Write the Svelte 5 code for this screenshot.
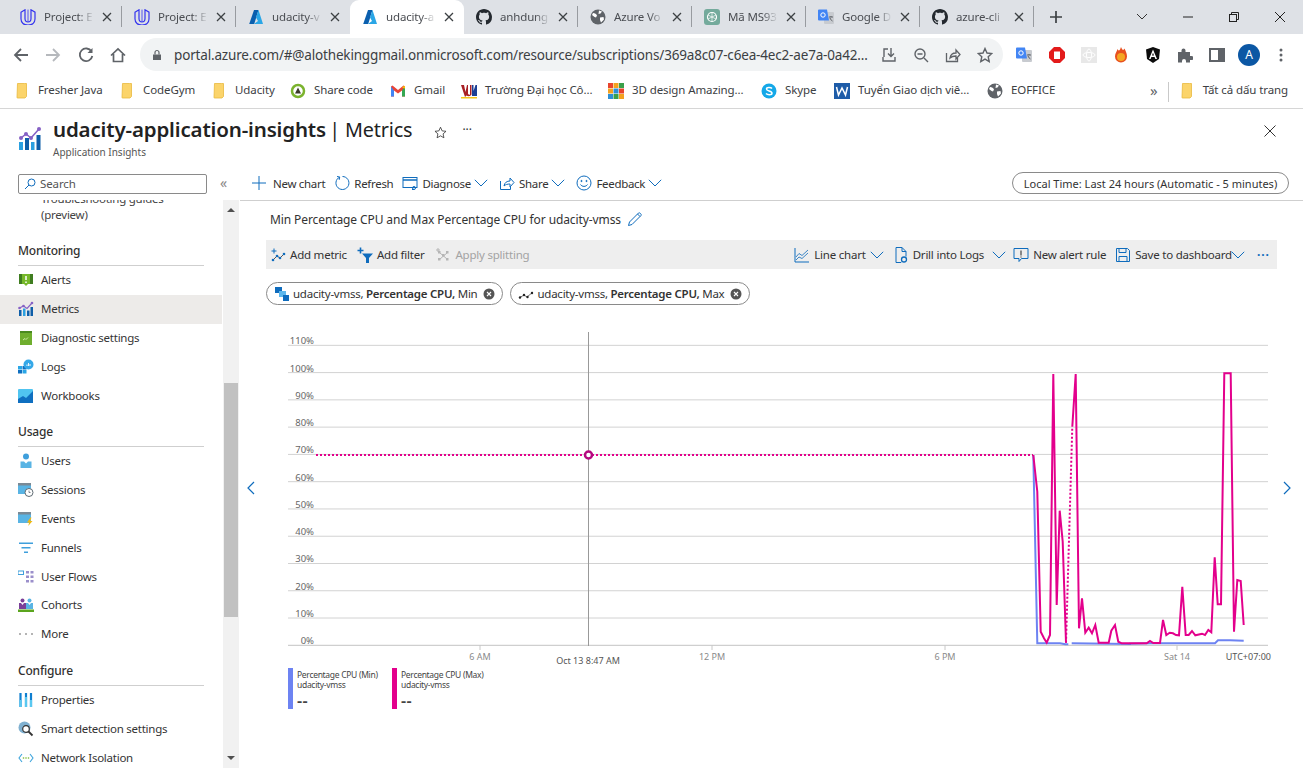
<script>
  const tabs = [
    { t: 'Project: E', i: 'u' }, { t: 'Project: E', i: 'u' }, { t: 'udacity-v', i: 'az', ns: 1 },
    { t: 'udacity-a', i: 'az', active: 1 }, { t: 'anhdung', i: 'gh' }, { t: 'Azure Vo', i: 'globe' },
    { t: 'Mã MS93', i: 'gpt' }, { t: 'Google D', i: 'gt' }, { t: 'azure-cli', i: 'gh' }
  ];
  const bookmarks = [
    { t: 'Fresher Java', i: 'folder', w: 105 }, { t: 'CodeGym', i: 'folder', w: 92 }, { t: 'Udacity', i: 'folder', w: 79 },
    { t: 'Share code', i: 'share', w: 100 }, { t: 'Gmail', i: 'gmail', w: 71 }, { t: 'Trường Đại học Cô...', i: 'vku', w: 147 },
    { t: '3D design Amazing...', i: 'tink', w: 153 }, { t: 'Skype', i: 'skype', w: 73 }, { t: 'Tuyển Giao dịch viê...', i: 'word', w: 153 },
    { t: 'EOFFICE', i: 'globe', w: 90 }
  ];
  const groups = [
    { h: 'Monitoring', items: [['Alerts', 'alert'], ['Metrics', 'metrics', 1], ['Diagnostic settings', 'diag'], ['Logs', 'logs'], ['Workbooks', 'work']] },
    { h: 'Usage', items: [['Users', 'users'], ['Sessions', 'sess'], ['Events', 'events'], ['Funnels', 'funnel'], ['User Flows', 'flows'], ['Cohorts', 'cohorts'], ['More', 'more']] },
    { h: 'Configure', items: [['Properties', 'props'], ['Smart detection settings', 'smart'], ['Network Isolation', 'net']] }
  ];
  const base = 645.3, step = 27.27;
  const gridY = Array.from({ length: 12 }, (_, i) => ({ p: i * 10, y: base - i * step }));
  const z7 = (a) => a.map(([x, y]) => [1020 + x / 3, 360 + y / 3]);
  const z8 = (a) => a.map(([x, y]) => [1130 + x / 3, 360 + y / 3]);
  const pts = (a) => a.map(([x, y]) => `${x.toFixed(1)},${y.toFixed(1)}`).join(' ');
  const mag1 = pts(z7([[40,285],[52,395],[62,815],[72,835],[80,848],[90,825],[100,42],[110,735],[119,452],[128,545],[138,848]]));
  const mag2 = pts([...z7([[157,200],[167,42],[177,805],[186,715],[196,818],[206,803],[216,820],[226,795],[236,848],[266,848],[274,812],[285,795],[295,845],[305,850],[330,850]]),
    ...z8([[0,850],[50,850],[60,843],[70,849],[90,849],[99,780],[109,825],[119,818],[129,820],[138,825],[147,826],[157,680],[167,825],[176,825],[186,813],[196,826],[216,821],[225,825],[235,810],[244,817],[254,592],[263,733],[273,733],[283,40],[302,40],[312,815],[322,660],[332,663],[341,795]])]);
  const magDot = pts(z7([[138,848],[157,200]]));
  const blue1 = pts(z7([[40,285],[52,850],[120,850],[136,853],[145,853]]));
  const blue2 = pts([...z7([[155,850],[330,852]]), ...z8([[0,851],[60,850],[255,850],[264,841],[300,841],[341,842]])]);
  const xLabels = [[480, '6 AM'], [712, '12 PM'], [945, '6 PM'], [1177, 'Sat 14']];
  const gh = 'M8 0C3.58 0 0 3.58 0 8c0 3.54 2.29 6.53 5.47 7.59.4.07.55-.17.55-.38 0-.19-.01-.82-.01-1.49-2.01.37-2.53-.49-2.69-.94-.09-.23-.48-.94-.82-1.13-.28-.15-.68-.52-.01-.53.63-.01 1.08.58 1.23.82.72 1.21 1.87.87 2.33.66.07-.52.28-.87.51-1.07-1.78-.2-3.64-.89-3.64-3.95 0-.87.31-1.59.82-2.15-.08-.2-.36-1.02.08-2.12 0 0 .67-.21 2.2.82.64-.18 1.32-.27 2-.27s1.36.09 2 .27c1.53-1.04 2.2-.82 2.2-.82.44 1.1.16 1.92.08 2.12.51.56.82 1.27.82 2.15 0 3.07-1.87 3.75-3.65 3.95.29.25.54.73.54 1.48 0 1.07-.01 1.93-.01 2.2 0 .21.15.46.55.38A8.01 8.01 0 0 0 16 8c0-4.42-3.58-8-8-8z';
</script>

{#snippet icon(n)}
  <svg class="ic" viewBox="0 0 16 16" width="16" height="16" fill="none">
    {#if n === 'u'}
      <path d="M1 3.200 5 .8v8.700c0 2.200 1 3.500 3 3.500s3-1.300 3-3.500V.8l4 2.400v6.800c0 3.800-3 6-7 6s-7-2.200-7-6z" stroke="#3434ee" stroke-width="1.200"/>
      <path d="M8 .6V13" stroke="#3434ee" stroke-width=".8"/>
    {:else if n === 'az'}
      <path d="M6 1h4.500L6.200 15H1.200z" fill="#0a5fae"/><path d="M10.500 1 15 15H6l4-3-2-3.500z" fill="#2aa6e6"/>
    {:else if n === 'gh'}
      <path d={gh} fill="#24292f"/>
    {:else if n === 'globe'}
      <circle cx="8" cy="8" r="7.500" fill="#5f6368"/><path d="M3 4c2 0 3.500 1 4 2.500L6 8.500 4.500 8 2 6zM9 1.500l3 1-1.500 2-2 .5zM10 8.500l3.500-.5.500 2.500-3 3-1-2.500z" fill="#fff"/>
    {:else if n === 'gpt'}
      <rect width="16" height="16" rx="3" fill="#74aa9c"/><circle cx="8" cy="8" r="4.500" stroke="#fff" stroke-width="1.200"/><path d="M8 3.500v9M4 6l8 4M12 6l-8 4" stroke="#fff" stroke-width=".7"/>
    {:else if n === 'gt'}
      <rect x="6" y="3" width="10" height="12" rx="1" fill="#c8cbd0"/><path d="M0 1.500a1 1 0 0 1 1-1h8l2 11H1a1 1 0 0 1-1-1z" fill="#4285f4"/><circle cx="5" cy="6" r="2.200" stroke="#fff" stroke-width="1"/><path d="M11 8h4M13 7v1M12 9c.5 1.500 1.500 2.500 2.500 3" stroke="#5f6368"/>
    {:else if n === 'folder'}
      <path d="M2.500 .5h7l2 0v13l-1.500 1.500h-7.500a.5.5 0 0 1-.5-.5z" fill="#fbd46b" stroke="#e9b93e" stroke-width=".8" transform="translate(1 0)"/>
    {:else if n === 'share'}
      <circle cx="8" cy="8" r="6" stroke="#7bb32e" stroke-width="2.500"/><path d="M8 4.500 11 10.500H5z" fill="#3a3a2a"/>
    {:else if n === 'gmail'}
      <path d="M1 3.500v10h3v-6l4 3 4-3v6h3v-10l-1.500-1L8 7 2.500 2.500z" fill="#ea4335"/><path d="M1 3.500v10h3v-6z" fill="#4285f4"/><path d="M15 3.500v10h-3v-6z" fill="#34a853"/><path d="M12 4.700 14 2.800l1 .7v2z" fill="#fbbc04"/>
    {:else if n === 'vku'}
      <path d="M0 2h3l1.500 7L6 2h1v8.500c0 1 1 1.500 2 1 V2h1.500v9c0 2-3 3-5 1.500L4 14 0 2z" fill="#a81f24"/><path d="M11 2h1.500v6l2-6H16v11h-5z" fill="#1b3f94"/><rect y="14" width="16" height="1.500" fill="#f5c518"/>
    {:else if n === 'tink'}
      <rect width="5" height="5" fill="#e8442e"/><rect x="5.500" width="5" height="5" fill="#f4a11f"/><rect x="11" width="5" height="5" fill="#3aa04a"/><rect y="5.500" width="5" height="5" fill="#f4a11f"/><rect x="5.500" y="5.500" width="5" height="5" fill="#2d8fd5"/><rect x="11" y="5.500" width="5" height="5" fill="#e8442e"/><rect y="11" width="5" height="5" fill="#2d8fd5"/><rect x="5.500" y="11" width="5" height="5" fill="#3aa04a"/><rect x="11" y="11" width="5" height="5" fill="#f4a11f"/>
    {:else if n === 'skype'}
      <circle cx="8" cy="8" r="7.500" fill="#14a8e8"/><path d="M11 5.500C10 4.200 5.500 4 5.500 6c0 2.500 5.500 1.500 5.500 4.200 0 2-4.500 2-6 .3" stroke="#fff" stroke-width="1.500"/>
    {:else if n === 'word'}
      <rect width="16" height="16" fill="#1e5ca8"/><path d="m2.500 4 2 8 3.500-7 3.500 7 2-8" stroke="#fff" stroke-width="1.500"/>
    {:else if n === 'alert'}
      <rect x="1" y="2" width="14" height="10" fill="#76b82a"/><rect x="1" y="2" width="3" height="10" fill="#3f7d20"/><rect x="12" y="2" width="3" height="10" fill="#3f7d20"/><path d="M8 4v4M8 9.500v1.500" stroke="#fff" stroke-width="1.500"/><path d="M6 12h4L8 14z" fill="#76b82a"/>
    {:else if n === 'metrics'}
      <path d="M1.500 7 5.500 5 9 7.500 14 2" stroke="#8661c5" stroke-width="1.200"/><circle cx="1.500" cy="7" r="1.300" fill="#8661c5"/><circle cx="5.500" cy="5" r="1.300" fill="#8661c5"/><circle cx="14" cy="2" r="1.300" fill="#8661c5"/><rect x="1" y="9" width="2.500" height="6" fill="#0f5ea8"/><rect x="5" y="7.500" width="2.500" height="7.500" fill="#2ba0e0"/><rect x="9" y="9.500" width="2.500" height="5.500" fill="#0f5ea8"/><rect x="12.500" y="6" width="2.500" height="9" fill="#0f5ea8"/>
    {:else if n === 'diag'}
      <rect x="2" y="1" width="12" height="14" fill="#6fae2e"/><rect x="2" y="1" width="12" height="2" fill="#4a8a1f"/><path d="m5 10 2-1.500 1 1 2-2" stroke="#d6f0b0" stroke-width=".9"/>
    {:else if n === 'logs'}
      <rect x="0" y="7" width="4" height="3.500" fill="#2aa6e6"/><rect x="4.500" y="7" width="4" height="3.500" fill="#0f6fc0"/><rect x="0" y="11" width="4" height="3.500" fill="#0f6fc0"/><rect x="4.500" y="11" width="4" height="3.500" fill="#2aa6e6"/><circle cx="10.500" cy="5.500" r="5" fill="#35a8e8"/><path d="M9 7V5.500M10.500 7V4M12 7V5" stroke="#fff" stroke-width=".9"/>
    {:else if n === 'work'}
      <rect y="1" width="15" height="14" rx="1" fill="#50c4f0"/><path d="M0 15v-4l5-3 3 2 7-7v12z" fill="#0f6fc0"/>
    {:else if n === 'users'}
      <circle cx="8" cy="3.500" r="3" fill="#3f9fdc"/><path d="M2.500 15V8.500h3.500L8 10.500 10 8.500h3.500V15z" fill="#59b4e4"/>
    {:else if n === 'sess'}
      <rect y="1" width="13" height="11" fill="#59b4e4"/><rect y="1" width="13" height="2.500" fill="#7a8a96"/><circle cx="11" cy="10.500" r="4" fill="#fff" stroke="#5f6b73" stroke-width="1"/><path d="M11 8.500v2h1.500" stroke="#5f6b73" stroke-width=".8"/>
    {:else if n === 'events'}
      <rect y="1" width="13" height="11" fill="#59b4e4"/><rect y="1" width="13" height="2.500" fill="#7a8a96"/><path d="M12.500 6.500 9 11.500h2.200l-1 3.500 4.300-5h-2.300l1.300-3.500z" fill="#f2b90f"/>
    {:else if n === 'funnel'}
      <rect x="1" y="2.500" width="14" height="1.500" fill="#3f9fdc"/><rect x="3.500" y="7" width="9" height="1.500" fill="#3f9fdc"/><rect x="6" y="11.500" width="4" height="1.500" fill="#3f9fdc"/>
    {:else if n === 'flows'}
      <rect x="0" y="2" width="5.500" height="3.500" stroke="#3f9fdc"/><g fill="#9b8fcb"><rect x="8" y="2" width="3" height="2.500"/><rect x="12.500" y="2" width="3" height="2.500"/><rect x="8" y="6.500" width="3" height="2.500"/><rect x="12.500" y="6.500" width="3" height="2.500"/><rect x="8" y="11" width="3" height="2.500"/><rect x="12.500" y="11" width="3" height="2.500"/></g>
    {:else if n === 'cohorts'}
      <circle cx="4.500" cy="3.500" r="2" fill="#7a3f98"/><circle cx="11.500" cy="3.500" r="2" fill="#59b4e4"/><path d="M1 12V6h2l1.500 2L6 6h2v6z" fill="#7a3f98"/><path d="M8 12V6h2l1.500 2L13 6h2v6z" fill="#59b4e4"/><rect y="12.500" width="16" height="2.500" fill="#5ba51e"/>
    {:else if n === 'more'}
      <g fill="#555"><circle cx="2" cy="8" r=".8"/><circle cx="8" cy="8" r=".8"/><circle cx="14" cy="8" r=".8"/></g>
    {:else if n === 'props'}
      <path d="M2.500 1v14M8 1v14M13 1v14" stroke="#0f7fd0" stroke-width="2.200"/><path d="M2.500 8v7M8 5v10M13 8v7" stroke="#59c8f0" stroke-width="2.200"/>
    {:else if n === 'smart'}
      <circle cx="6.500" cy="6.500" r="6" fill="#7fb0d0"/><circle cx="8" cy="8" r="3.300" fill="#fff" stroke="#333" stroke-width="1.200"/><path d="m10.500 10.500 4 4" stroke="#333" stroke-width="1.800"/>
    {:else if n === 'net'}
      <path d="M4 4 1 8l3 4M12 4l3 4-3 4" stroke="#3fa5dc" stroke-width="1.100"/><g fill="#76b82a"><circle cx="5.500" cy="8" r=".8"/><circle cx="8" cy="8" r=".8"/><circle cx="10.500" cy="8" r=".8"/></g>
    {/if}
  </svg>
{/snippet}

{#snippet cmd(n)}
  <svg class="ic" viewBox="0 0 16 16" width="16" height="16" fill="none" stroke="#0f6cbd" stroke-width="1">
    {#if n === 'plus'}
      <path d="M8 1v14M1 8h14"/>
    {:else if n === 'refresh'}
      <path d="M5.500 2.200A6.500 6.500 0 1 0 8.500 1.500"/><path d="M3 1.500 5.700 2 5.200 4.800" stroke-width="1"/>
    {:else if n === 'diagnose'}
      <rect x="1" y="2.500" width="14" height="10"/><path d="M1 5h14" stroke-width="1.500"/><circle cx="12" cy="13" r="1.500"/><path d="M10 14.500h2"/>
    {:else if n === 'share'}
      <path d="M1.500 6v8.500h10V11"/><path d="M5 11c.5-3.500 3-5 6-5V3l4 4.500L11 12V9c-2.500 0-4.500.5-6 2z"/>
    {:else if n === 'feedback'}
      <circle cx="8" cy="8" r="7"/><circle cx="5.500" cy="6" r=".6" fill="#0f6cbd"/><circle cx="10.500" cy="6" r=".6" fill="#0f6cbd"/><path d="M4.500 9.500c1.500 2.500 5.500 2.500 7 0"/>
    {:else if n === 'chart'}
      <path d="M1 1v14h14"/><path d="m2 10 3-3.500 3 2L14 3M2 13l3-3 3 1.500L14 6" stroke-width=".8"/>
    {:else if n === 'drill'}
      <path d="M3 15.500V.5h6l4 4v5M9 .5v4h4M3 15.500h5"/><circle cx="11" cy="12.500" r="2.500" stroke-width="1.300"/><path d="m9 14.500-1 1"/>
    {:else if n === 'bell'}
      <path d="M1 1.500h14v10H8.500L6 14.500v-3H1z"/><path d="M8 3.500v5M8 9.500v1" stroke="#444" stroke-width="1.200"/>
    {:else if n === 'save'}
      <path d="M1.500 1.500h11l2 2v11h-13z"/><path d="M4 1.500v4h7v-4M4 14.500v-5h8v5"/>
    {:else if n === 'pencil'}
      <path d="M1.500 14.500 2.500 11 11.500 2c1-1 3.500 1.500 2.500 2.500L5 13.500zM10.500 3l2.500 2.500"/>
    {:else if n === 'addm'}
      <path d="m3 13 4-4 3 2 4-4" stroke="#444" stroke-width=".9"/><g fill="#0f6cbd" stroke="none"><circle cx="3" cy="13" r="1.300"/><circle cx="7" cy="9" r="1.300"/><circle cx="10" cy="11" r="1.300"/><circle cx="14" cy="7" r="1.300"/></g><path d="M4 1.500v5M1.500 4h5"/>
    {:else if n === 'filter'}
      <path d="M5 6.500h11l-4 4.500v5h-3v-5z" fill="#0f6cbd" stroke="none"/><path d="M3.500 .5v6M.5 3.500h6" stroke-width="1.600"/>
    {:else if n === 'split'}
      <g fill="#b5b5b5" stroke="none"><rect x="3" y="4" width="2.500" height="2.500"/><rect x="7" y="7" width="2.500" height="2.500"/><rect x="11" y="4" width="2.500" height="2.500"/><rect x="3" y="11" width="2.500" height="2.500"/><rect x="11" y="11" width="2.500" height="2.500"/></g><path d="M3 1v4M1 3h4M5 6l7 6M12 6l-7 6" stroke="#b5b5b5"/>
    {:else if n === 'vmss'}
      <g stroke="none"><rect x="1" y="1" width="7" height="6" fill="#0f6cbd"/><rect x="5" y="5" width="7" height="6" fill="#5db7ec"/><rect x="9" y="9" width="6" height="6" fill="#0f6cbd"/></g>
    {:else if n === 'spark'}
      <path d="m1 12 5-3 3 2 6-5" stroke="#333" stroke-width=".7"/><g fill="#222" stroke="none"><circle cx="2" cy="11.500" r="1.200"/><circle cx="6" cy="9" r="1.200"/><circle cx="9.500" cy="11" r="1.200"/><circle cx="14" cy="7" r="1.200"/></g>
    {/if}
  </svg>
{/snippet}

{#snippet chev()}
  <svg class="chev" viewBox="0 0 14 8" width="14" height="8" fill="none" stroke="#0f6cbd"><path d="M.8.8 7 7l6.200-6.200"/></svg>
{/snippet}

{#snippet clear()}
  <svg class="ic" viewBox="0 0 12 12" width="12" height="12"><circle cx="6" cy="6" r="5.500" fill="#555"/><path d="m4 4 4 4m0-4-4 4" stroke="#fff" stroke-width="1.100"/></svg>
{/snippet}

<div class="page">
  <div class="tabstrip">
    {#each tabs as tab}
      <div class="tab" class:active={tab.active} class:nosep={tab.ns}>
        {@render icon(tab.i)}
        <span class="tabtext">{tab.t}</span>
        <svg class="tabx" viewBox="0 0 10 10" width="10" height="10"><path d="m1 1 8 8m0-8-8 8" stroke="#3c4043" stroke-width="1.300"/></svg>
      </div>
    {/each}
    <svg class="newtab" viewBox="0 0 14 14" width="14" height="14"><path d="M7 1v12M1 7h12" stroke="#3c4043" stroke-width="1.700"/></svg>
    <div class="winctl">
      <svg viewBox="0 0 12 8" width="12" height="8" fill="none"><path d="m1 1 5 5 5-5" stroke="#333"/></svg>
      <svg viewBox="0 0 12 12" width="12" height="12"><path d="M1 6h10" stroke="#222"/></svg>
      <svg viewBox="0 0 12 12" width="12" height="12" fill="none" stroke="#222"><rect x="1.500" y="3.500" width="7" height="7"/><path d="M3.500 3.500v-2h7v7h-2"/></svg>
      <svg viewBox="0 0 12 12" width="12" height="12"><path d="m1 1 10 10m0-10L1 11" stroke="#222"/></svg>
    </div>
  </div>

  <div class="toolbar">
    <div class="navs">
      <svg viewBox="0 0 16 16" width="16" height="16" fill="none" stroke="#5f6368" stroke-width="1.800"><path d="M15 8H2M8 2 2 8l6 6"/></svg>
      <svg viewBox="0 0 16 16" width="16" height="16" fill="none" stroke="#b6b9bd" stroke-width="1.800"><path d="M1 8h13M8 2l6 6-6 6"/></svg>
      <svg viewBox="0 0 16 16" width="16" height="16" fill="none" stroke="#5f6368" stroke-width="1.800"><path d="M13.500 4.500A6.300 6.300 0 1 0 14.300 9"/><path d="M14.500 1v5h-5" fill="#5f6368" stroke="none"/></svg>
      <svg viewBox="0 0 16 16" width="16" height="16" fill="none" stroke="#5f6368" stroke-width="1.700"><path d="M1 8.500 8 2l7 6.500M3.500 7v7.500h9V7"/></svg>
    </div>
    <div class="omni">
      <svg viewBox="0 0 10 12" width="10" height="12"><path d="M1 5.500h8V11H1z" fill="#5f6368"/><path d="M3 5.500V3.500a2 2 0 0 1 4 0v2" fill="none" stroke="#5f6368" stroke-width="1.200"/></svg>
      <span class="url">portal.azure.com/#@alothekinggmail.onmicrosoft.com/resource/subscriptions/369a8c07-c6ea-4ec2-ae7a-0a42...</span>
      <div class="omniicons">
        <svg viewBox="0 0 16 16" width="16" height="16" fill="none" stroke="#5f6368" stroke-width="1.400"><path d="M3 10V2h4M14 10v4H2v-4M10 1v8M7 6.500l3 3 3-3"/></svg>
        <svg viewBox="0 0 16 16" width="16" height="16" fill="none" stroke="#5f6368" stroke-width="1.400"><circle cx="7" cy="7" r="5"/><path d="m11 11 4 4M4.500 7h5"/></svg>
        <svg viewBox="0 0 16 16" width="16" height="16" fill="none" stroke="#5f6368" stroke-width="1.300"><path d="M1.500 6v8.500h11V11"/><path d="M5 11c.5-3.500 3-5 6-5V3l4 4.500L11 12V9c-2.500 0-4.500.5-6 2z"/></svg>
        <svg viewBox="0 0 16 16" width="16" height="16" fill="none" stroke="#5f6368" stroke-width="1.400"><path d="m8 1.500 2 4.500 4.800.5-3.600 3.200 1 4.800L8 12.100l-4.200 2.400 1-4.800L1.200 6.500 6 6z"/></svg>
      </div>
    </div>
    <div class="exts">
      {@render icon('gt')}
      <svg viewBox="0 0 16 16" width="16" height="16"><path d="M5 0h6l5 5v6l-5 5H5l-5-5V5z" fill="#e31b1b"/><path d="M5 7V4.500h6V12H5z" fill="#fff"/></svg>
      <svg viewBox="0 0 16 16" width="16" height="16" fill="none"><rect width="16" height="16" fill="#e8e8e8"/><ellipse cx="8" cy="8" rx="6" ry="2.500" stroke="#fff"/><ellipse cx="8" cy="8" rx="2.500" ry="6" stroke="#fff"/></svg>
      <svg viewBox="0 0 16 16" width="16" height="16"><path d="M8 0c1 2 1 2 2 3 1-.5 1-1 1.500-1.500C12.500 4 14 6 14 9.500a6 6 0 0 1-12 0C2 6 4 4.500 4.500 2 5 3 5.500 3.500 6 3.500 7 3 7.500 1.500 8 0z" fill="#e8501f"/><circle cx="8" cy="10" r="4" fill="#f5a623"/></svg>
      <svg viewBox="0 0 16 16" width="16" height="16"><path d="M8 0 15 2.500 14 12l-6 4-6-4-1-9.500z" fill="#0c0c0c"/><path d="M8 2.500 4 12h1.600l.8-2h3.200l.8 2H12zm0 3.200L9 8.500H7z" fill="#fff" fill-rule="evenodd"/></svg>
      <svg viewBox="0 0 16 16" width="16" height="16"><path d="M1 5h3.500V3.500a2 2 0 0 1 4 0V5H13v4h1.500a2 2 0 0 1 0 4H13v2.500H9V14a2 2 0 0 0-4 0v1.500H1z" fill="#5f6368"/></svg>
      <svg viewBox="0 0 16 16" width="16" height="16" fill="none"><rect x="1" y="2" width="14" height="12" fill="#fff" stroke="#5f6368" stroke-width="2"/><rect x="9" y="2" width="6" height="12" fill="#5f6368"/></svg>
      <div class="avatar">A</div>
      <svg class="dots" viewBox="0 0 4 16" width="4" height="16"><g fill="#5f6368"><circle cx="2" cy="3" r="1.500"/><circle cx="2" cy="8" r="1.500"/><circle cx="2" cy="13" r="1.500"/></g></svg>
    </div>
  </div>

  <div class="bookmarks">
    {#each bookmarks as b}
      <div class="bm" style="width:{b.w}px">{@render icon(b.i)}<span>{b.t}</span></div>
    {/each}
    <div class="bmright">
      <span class="more">»</span>
      <span class="bmsep"></span>
      {@render icon('folder')}
      <span>Tất cả dấu trang</span>
    </div>
  </div>

  <header class="blade">
    <svg class="bladeicon" viewBox="0 0 24 24" width="24" height="24" fill="none">
      <path d="M3 12 8 8l5 4 8-9" stroke="#8661c5" stroke-width="1.600"/>
      <circle cx="3" cy="12" r="2" fill="#8661c5"/><circle cx="8" cy="8" r="2" fill="#8661c5"/><circle cx="13" cy="12" r="2" fill="#8661c5"/><circle cx="21" cy="3" r="2" fill="#8661c5"/>
      <rect x="1" y="16" width="4" height="8" fill="#2ba0e0"/><rect x="7" y="12" width="4" height="12" fill="#0f5ea8"/><rect x="13" y="16" width="3.500" height="8" fill="#2ba0e0"/><rect x="18.500" y="9" width="4" height="15" fill="#0f5ea8"/>
    </svg>
    <div class="bladetitle">
      <h1><b>udacity-application-insights</b> <span>| Metrics</span></h1>
      <div class="sub">Application Insights</div>
    </div>
    <svg class="star" viewBox="0 0 16 16" width="13" height="13" fill="none" stroke="#333"><path d="m8 1.500 2 4.500 4.800.5-3.600 3.200 1 4.800L8 12.100l-4.200 2.400 1-4.800L1.200 6.500 6 6z"/></svg>
    <span class="ell">···</span>
    <svg class="close" viewBox="0 0 12 12" width="12" height="12"><path d="m.5.500 11 11m0-11-11 11" stroke="#333"/></svg>
  </header>

  <div class="body">
    <aside class="side">
      <div class="searchrow">
        <div class="search">
          <svg viewBox="0 0 12 12" width="12" height="12" fill="none" stroke="#0f6cbd"><circle cx="7.500" cy="4.500" r="3.500"/><path d="m5 7-4 4"/></svg>
          <span>Search</span>
        </div>
        <span class="collapse">«</span>
      </div>
      <div class="sidescroll">
        <nav class="nav">
          <div class="clipped"><span class="cut"></span><span>Troubleshooting guides<br />(preview)</span></div>
          {#each groups as g}
            <div class="gh">{g.h}</div>
            {#each g.items as it}
              <div class="item" class:sel={it[2]}>{@render icon(it[1])}<span>{it[0]}</span></div>
            {/each}
          {/each}
        </nav>
        <div class="scrollbar">
          <span class="arr up"></span>
          <span class="thumb"></span>
          <span class="arr down"></span>
        </div>
      </div>
    </aside>

    <main class="main">
      <div class="cmdbar">
        <div class="cb first">{@render cmd('plus')}<span>New chart</span></div>
        <div class="cb">{@render cmd('refresh')}<span>Refresh</span></div>
        <div class="cb">{@render cmd('diagnose')}<span>Diagnose</span>{@render chev()}</div>
        <div class="cb">{@render cmd('share')}<span>Share</span>{@render chev()}</div>
        <div class="cb">{@render cmd('feedback')}<span>Feedback</span>{@render chev()}</div>
        <div class="timepill">Local Time: Last 24 hours (Automatic - 5 minutes)</div>
      </div>

      <div class="charttitle"><span>Min Percentage CPU and Max Percentage CPU for udacity-vmss</span>{@render cmd('pencil')}</div>

      <div class="charttools">
        <div class="ct">{@render cmd('addm')}<span>Add metric</span></div>
        <div class="ct addf">{@render cmd('filter')}<span>Add filter</span></div>
        <div class="ct dis">{@render cmd('split')}<span>Apply splitting</span></div>
        <div class="ctr">
          <div class="ct">{@render cmd('chart')}<span>Line chart</span>{@render chev()}</div>
          <div class="ct drill">{@render cmd('drill')}<span>Drill into Logs</span>{@render chev()}</div>
          <div class="ct">{@render cmd('bell')}<span>New alert rule</span></div>
          <div class="ct save">{@render cmd('save')}<span>Save to dashboard</span>{@render chev()}</div>
          <span class="blue-ell">···</span>
        </div>
      </div>

      <div class="pills">
        <div class="pill">{@render cmd('vmss')}<span>udacity-vmss, <b>Percentage CPU,</b> Min</span>{@render clear()}</div>
        <div class="pill">{@render cmd('spark')}<span>udacity-vmss, <b>Percentage CPU,</b> Max</span>{@render clear()}</div>
      </div>

      <div class="chartwrap">
        <svg class="chart" viewBox="266 325 1011 345" width="1011" height="345">
          {#each gridY as g}
            <line x1="288" x2="1268" y1={g.y} y2={g.y} stroke={g.p === 0 ? '#c4c4c4' : '#d2d2d2'} stroke-width="1" />
            <text x="314" y={g.y - 1} text-anchor="end" class="ylab">{g.p}%</text>
          {/each}
          {#each xLabels as [x, t]}
            <line x1={x} x2={x} y1="645" y2="650" stroke="#c8c8c8" />
            <text x={x} y="660" text-anchor="middle" class="xlab">{t}</text>
          {/each}
          <text x="1271" y="660" text-anchor="end" class="xlab dark">UTC+07:00</text>
          <text x="588" y="664" text-anchor="middle" class="xlab dark">Oct 13 8:47 AM</text>
          <line x1="588.500" x2="588.500" y1="332" y2="646" stroke="#999" stroke-width="1" />
          <polyline points={blue1} fill="none" stroke="#6d83f2" stroke-width="2" />
          <polyline points={blue2} fill="none" stroke="#6d83f2" stroke-width="2" />
          <line x1="316" x2="1033" y1="455" y2="455" stroke="#e3008c" stroke-width="2" stroke-dasharray="2 2" />
          <polyline points={mag1} fill="none" stroke="#e3008c" stroke-width="2" />
          <polyline points={magDot} fill="none" stroke="#e3008c" stroke-width="2" stroke-dasharray="2 2" />
          <polyline points={mag2} fill="none" stroke="#e3008c" stroke-width="2" />
          <circle cx="588.500" cy="455" r="3.500" fill="#fff" stroke="#b4097f" stroke-width="2.500" />
        </svg>
        <button class="pager left" aria-label="Previous"><svg viewBox="0 0 9 14" width="9" height="14" fill="none" stroke="#0f6cbd" stroke-width="1.200"><path d="M8 1 2 7l6 6"/></svg></button>
        <button class="pager right" aria-label="Next"><svg viewBox="0 0 9 14" width="9" height="14" fill="none" stroke="#0f6cbd" stroke-width="1.200"><path d="m1 1 6 6-6 6"/></svg></button>
        <div class="legend">
          <div class="lg min"><div>Percentage CPU (Min)</div><div>udacity-vmss</div><div class="dash">--</div></div>
          <div class="lg max"><div>Percentage CPU (Max)</div><div>udacity-vmss</div><div class="dash">--</div></div>
        </div>
      </div>
    </main>
  </div>
</div>

<style>
  :global(body) { margin: 0; background: #fff; }
  .page { width: 1303px; height: 768px; overflow: hidden; display: flex; flex-direction: column; font-family: "Noto Sans", "Open Sans", sans-serif; font-size: 12px; color: #333; }
  svg { display: block; flex: none; }

  .tabstrip { height: 34px; background: #dee1e6; display: flex; padding-left: 8px; position: relative; }
  .tab { width: 114px; box-sizing: border-box; display: flex; align-items: center; padding-left: 12px; position: relative; flex: none; }
  .tab:not(.active):not(.nosep)::after { content: ""; position: absolute; right: 0; top: 6px; height: 21px; width: 1px; background: #989ba0; }
  .tab.active { background: #fff; border-radius: 9px 9px 0 0; }
  .tabtext { width: 50px; margin: -2px 0 0 8px; overflow: hidden; white-space: nowrap; font-size: 11.5px; letter-spacing: -.15px; color: #4a4d52; -webkit-mask-image: linear-gradient(90deg, #000 70%, transparent); mask-image: linear-gradient(90deg, #000 70%, transparent); }
  .tabx { position: absolute; left: 94px; top: 12px; }
  .newtab { margin: 10px 0 0 15px; }
  .winctl { position: absolute; right: 17px; top: 10px; width: 150px; display: flex; justify-content: space-between; align-items: center; height: 14px; }

  .toolbar { height: 41px; display: flex; align-items: center; background: #fff; }
  .navs { width: 140px; display: flex; box-sizing: border-box; padding: 0 14px 0 13px; justify-content: space-between; }
  .omni { width: 863px; height: 33px; box-sizing: border-box; background: #f1f3f4; border-radius: 17px; display: flex; align-items: center; padding-left: 12px; }
  .url { margin-left: 12px; font-size: 13.5px; color: #3c4043; white-space: nowrap; letter-spacing: -.17px; }
  .omniicons { margin-left: auto; margin-right: 10px; display: flex; gap: 16px; }
  .exts { flex: 1; display: flex; align-items: center; gap: 16px; padding-left: 13px; }
  .exts > :nth-child(2) { margin-left: 1px; }
  .avatar { width: 22px; height: 22px; margin: 0 -3px; flex: none; border-radius: 50%; background: #0b57a4; color: #fff; font-size: 12px; display: flex; align-items: center; justify-content: center; }
  .dots { margin-left: 6px; }

  .bookmarks { height: 33px; display: flex; align-items: center; border-bottom: 1px solid #d6d6d6; padding: 0 0 0 14px; font-size: 11.5px; letter-spacing: -.1px; color: #3c4043; position: relative; }
  .bm { display: flex; align-items: center; gap: 8px; white-space: nowrap; flex: none; }
  .bm span, .bmright span:last-child { margin-top: -5px; }
  .bm svg, .bmright svg { margin-top: -1px; }
  .bmright { margin-left: auto; display: flex; align-items: center; gap: 8px; padding-right: 15px; white-space: nowrap; }
  .more { font-size: 15px; color: #5f6368; margin: -3px 2px 0 0; }
  .bmsep { width: 1px; height: 20px; background: #c9c9c9; margin-right: 2px; }

  .blade { height: 57px; flex: none; display: flex; align-items: flex-start; position: relative; padding-left: 18px; box-sizing: border-box; }
  .bladeicon { margin-top: 17px; }
  .bladetitle { margin-left: 11px; margin-top: 6px; }
  h1 { margin: 0; font-size: 20.5px; line-height: 28px; font-weight: 400; white-space: nowrap; letter-spacing: -.15px; color: #222; }
  h1 b { font-weight: 600; }
  h1 span { font-size: 19.8px; margin-left: -2px; }
  .sub { font-size: 10px; line-height: 14px; color: #555; margin-top: 1px; }
  .star { margin: 17px 0 0 22px; }
  .ell { margin: 12px 0 0 15px; font-size: 12px; }
  .close { position: absolute; right: 27px; top: 16px; }

  .body { flex: 1; display: flex; min-height: 0; }
  .side { width: 240px; flex: none; display: flex; flex-direction: column; min-height: 0; }
  .searchrow { height: 34px; flex: none; display: flex; align-items: flex-start; padding: 8px 0 0 18px; box-sizing: border-box; }
  .search { width: 189px; height: 20px; box-sizing: border-box; border: 1px solid #8a8a8a; border-radius: 2px; display: flex; align-items: center; gap: 4px; padding-left: 5px; color: #555; font-size: 11.5px; letter-spacing: -.1px; }
  .search span { margin-top: -2px; }
  .collapse { margin: 0 0 0 13px; color: #888; font-size: 14px; line-height: 18px; }
  .sidescroll { flex: 1; display: flex; min-height: 0; }
  .nav { width: 222px; flex: none; overflow: hidden; }
  .clipped { height: 38px; margin-top: -9px; padding-left: 41px; line-height: 16px; display: flex; color: #444; font-size: 11.5px; letter-spacing: -.25px; position: relative; }
  .cut { position: absolute; left: 18px; top: 0; width: 12px; height: 4px; background: #6fae2e; }
  .gh { margin: 13px 18px 0; height: 23px; line-height: 17px; border-bottom: 1px solid #cfcfcf; font-weight: 500; color: #323130; font-size: 12px; letter-spacing: -.2px; }
  .item { height: 28.8px; display: flex; align-items: center; gap: 7px; padding-left: 18px; font-size: 11.5px; letter-spacing: -.25px; color: #333; white-space: nowrap; }
  .item span { margin-top: -1px; }
  .item.sel { background: #edebe9; }
  .scrollbar { width: 16px; margin-left: 1px; background: #f1f1f1; display: flex; flex-direction: column; align-items: center; position: relative; }
  .thumb { position: absolute; left: 1px; right: 1px; top: 183px; height: 234px; background: #c1c1c1; }
  .arr { position: absolute; width: 0; height: 0; border-left: 4px solid transparent; border-right: 4px solid transparent; }
  .up { top: 8px; border-bottom: 4px solid #505050; }
  .down { bottom: 8px; border-top: 4px solid #505050; }

  .main { flex: 1; min-width: 0; }
  .cmdbar { height: 35px; box-sizing: border-box; border-bottom: 1px solid #cfcfcf; display: flex; align-items: center; gap: 9px; position: relative; }
  .cb { display: flex; align-items: center; gap: 4px; white-space: nowrap; color: #333; font-size: 11.5px; letter-spacing: -.3px; }
  .cb.first { margin-left: 11px; gap: 6px; }
  .cb .chev { margin: 0 2px 0 -1px; }
  .timepill { margin-left: auto; margin-right: 14px; width: 277px; height: 22px; box-sizing: border-box; border: 1px solid #8a8a8a; border-radius: 11px; display: flex; align-items: center; justify-content: center; font-size: 11px; color: #333; white-space: nowrap; }
  .charttitle { height: 39px; display: flex; align-items: center; gap: 6px; padding-left: 30px; font-size: 12px; letter-spacing: -.1px; color: #333; white-space: nowrap; }
  .charttitle span { margin-top: -2px; }
  .charttitle svg { margin: -3px 0 0 0; }
  .charttools { height: 29px; margin: 0 26px; background: #eeeeee; display: flex; align-items: center; padding-left: 4px; gap: 9px; }
  .ct { display: flex; align-items: center; gap: 4px; white-space: nowrap; font-size: 11.5px; letter-spacing: -.22px; color: #333; }
  .ct.dis { color: #a3a3a3; margin-left: 2px; }
  .addf { margin-left: 1px; }
  .drill .chev { margin: 0 -2px 0 4px; }
  .save .chev { margin-left: -5px; }
  .ctr { margin-left: auto; display: flex; align-items: center; gap: 9px; padding-right: 7px; }
  .blue-ell { color: #0f6cbd; font-weight: 700; letter-spacing: 1px; margin-left: 3px; }
  .pills { display: flex; gap: 7px; margin: 13px 26px 0; }
  .pill { height: 23px; box-sizing: border-box; border: 1px solid #8a8a8a; border-radius: 12px; display: flex; align-items: center; gap: 3px; padding: 0 7px; white-space: nowrap; font-size: 11.5px; letter-spacing: -.25px; color: #333; }
  .pill b { font-weight: 600; }
  .pill .ic:last-child { margin-left: 3px; }
  .chartwrap { position: relative; margin: 20px 26px 0; }
  .chart { display: block; }
  .ylab { font-family: "Noto Sans", sans-serif; font-size: 9.5px; fill: #666; }
  .xlab { font-family: "Noto Sans", sans-serif; font-size: 9px; fill: #8a8a8a; }
  .dark { fill: #555; }
  .pager { position: absolute; top: 156px; padding: 0; border: 0; background: none; }
  .left { left: -20px; }
  .right { right: -15px; }
  .legend { display: flex; gap: 9px; margin: -2px 0 0 22px; font-size: 8.5px; line-height: 10px; color: #444; }
  .lg { border-left: 5px solid; padding-left: 4px; height: 41px; width: 95px; white-space: nowrap; padding-top: 2px; box-sizing: border-box; letter-spacing: -.3px; }
  .min { border-color: #6d83f2; }
  .max { border-color: #e3008c; }
  .dash { font-size: 16px; line-height: 22px; font-weight: 600; letter-spacing: .5px; }
</style>
